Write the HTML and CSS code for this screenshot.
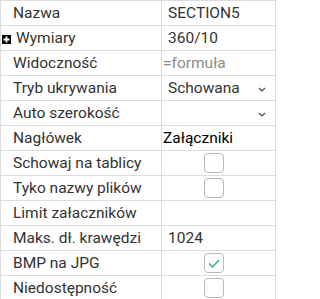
FILE: index.html
```html
<!DOCTYPE html>
<html>
<head>
<meta charset="utf-8">
<link rel="stylesheet" href="styles.css">
</head>
<body>
<table class="props">
  <tr><td class="lbl">Nazwa</td><td class="val">SECTION5</td></tr>
  <tr><td class="lbl lbl-exp"><div class="exp"><svg class="plus" width="9" height="9" viewBox="0 0 9 9"><rect width="9" height="9" fill="#000"/><path d="M1.5 4.5h6M4.5 1.5v6" stroke="#fff" stroke-width="1.8"/></svg><span>Wymiary</span></div></td><td class="val">360/10</td></tr>
  <tr><td class="lbl">Widoczność</td><td class="val val-input"><span class="ph">=formuła</span></td></tr>
  <tr><td class="lbl">Tryb ukrywania</td><td class="val"><div class="sel"><span>Schowana</span><svg class="chev" width="8" height="5" viewBox="0 0 8 5"><path d="M1 1l3 3 3-3" fill="none" stroke="#444" stroke-width="1.1"/></svg></div></td></tr>
  <tr><td class="lbl">Auto szerokość</td><td class="val"><div class="sel"><span></span><svg class="chev" width="8" height="5" viewBox="0 0 8 5"><path d="M1 1l3 3 3-3" fill="none" stroke="#444" stroke-width="1.1"/></svg></div></td></tr>
  <tr><td class="lbl">Nagłówek</td><td class="val val-input"><span class="txt">Załączniki</span></td></tr>
  <tr><td class="lbl">Schowaj na tablicy</td><td class="val"><span class="cb"></span></td></tr>
  <tr><td class="lbl">Tyko nazwy plików</td><td class="val"><span class="cb"></span></td></tr>
  <tr><td class="lbl">Limit załaczników</td><td class="val"></td></tr>
  <tr><td class="lbl">Maks. dł. krawędzi</td><td class="val">1024</td></tr>
  <tr><td class="lbl">BMP na JPG</td><td class="val"><span class="cb"><svg width="12" height="9" viewBox="0 0 12 9"><path d="M1 4.5l3.5 3.5L11 1" fill="none" stroke="#2aa889" stroke-width="1.3"/></svg></span></td></tr>
  <tr><td class="lbl">Niedostępność</td><td class="val"><span class="cb"></span></td></tr>
</table>
</body>
</html>
```

FILE: styles.css
```css
html, body {
  margin: 0;
  padding: 0;
  background: #fff;
}
.props {
  border-collapse: collapse;
  width: 276px;
  table-layout: fixed;
  font-family: Roboto, "Liberation Sans", sans-serif;
  font-size: 15.5px;
  color: #333;
}
.props td {
  border: 1px solid #dcdcdc;
  height: 24px;
  padding: 0;
  white-space: nowrap;
  vertical-align: middle;
  line-height: 24px;
}
.lbl {
  width: 148px;
  padding-left: 12px !important;
}
.lbl-exp {
  padding-left: 1px !important;
}
.exp {
  display: flex;
  align-items: center;
  gap: 5px;
}
.plus {
  flex: none;
  display: block;
  margin-top: 3px;
}
.val {
  padding-left: 6px !important;
}
.val-input {
  padding-left: 1px !important;
}
.ph { color: #8a8a8a; }
.txt { color: #000; }
.sel {
  display: flex;
  align-items: center;
  justify-content: space-between;
  padding-right: 9px;
}
.chev { display: block; margin-top: 2px; }
.cb {
  box-sizing: border-box;
  width: 20px;
  height: 20px;
  margin-left: 36px;
  border: 1px solid #b8b8b8;
  border-radius: 4px;
  display: flex;
  align-items: center;
  justify-content: center;
}
```
